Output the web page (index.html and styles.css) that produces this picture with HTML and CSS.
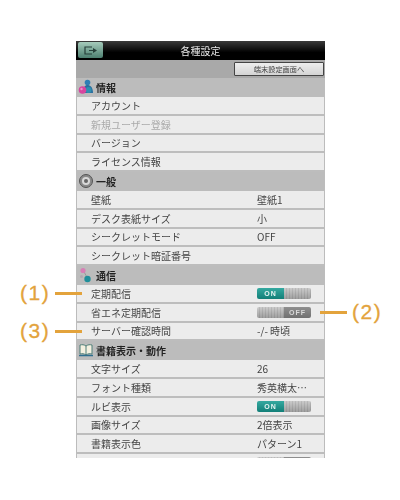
FILE: index.html
```html
<!DOCTYPE html>
<html>
<head>
    <title>各種設定</title>
    <link rel="stylesheet" href="styles.css">
</head>
<body>
    <div class="settings">
        <header class="title-bar">
            <button class="back-btn">
                <svg width="14" height="9" viewBox="0 0 14 9">
                    <path d="M8 1H1v7h7M5 4.500h5" fill="none" stroke="#27403a" stroke-width="1.200"/>
                    <path d="M9 2l4 2.500L9 7z" fill="#27403a"/>
                </svg>
            </button>
            <span class="title">各種設定</span>
        </header>
        <div class="tool-bar">
            <button class="device-btn">端末設定画面へ</button>
        </div>

        <div class="section">
            <svg class="section-icon" width="16" height="16" viewBox="0 0 16 16">
                <circle cx="9.500" cy="3.500" r="2.800" fill="#2f7fb5"/>
                <path d="M5 14c0-6 2-8 4.500-8s5.500 2 5.500 8z" fill="#2a6f9f"/>
                <circle cx="10.500" cy="11" r="3" fill="#2f8fb0"/>
                <circle cx="4.500" cy="11" r="3.800" fill="#d8459f"/>
                <circle cx="3.500" cy="10" r="1.200" fill="#ee90c8"/>
            </svg>
            情報
        </div>
        <div class="row"><span>アカウント</span></div>
        <div class="row disabled"><span>新規ユーザー登録</span></div>
        <div class="row"><span>バージョン</span></div>
        <div class="row"><span>ライセンス情報</span></div>

        <div class="section">
            <svg class="section-icon" width="16" height="16" viewBox="0 0 16 16">
                <circle cx="8" cy="8" r="6.500" fill="#8a8a8a" stroke="#555"/>
                <circle cx="8" cy="8" r="4" fill="#d8d8d8"/>
                <circle cx="8" cy="8" r="2" fill="#666"/>
            </svg>
            一般
        </div>
        <div class="row"><span>壁紙</span><span class="value">壁紙1</span></div>
        <div class="row"><span>デスク表紙サイズ</span><span class="value">小</span></div>
        <div class="row"><span>シークレットモード</span><span class="value">OFF</span></div>
        <div class="row"><span>シークレット暗証番号</span></div>

        <div class="section">
            <svg class="section-icon" width="16" height="16" viewBox="0 0 16 16">
                <path d="M5 3l5 9" stroke="#999"/>
                <circle cx="5" cy="3.500" r="2.600" fill="#d77fb5"/>
                <circle cx="3.500" cy="9.500" r="1.500" fill="#b0a8b0"/>
                <circle cx="9.500" cy="12" r="3.200" fill="#1f8f9a"/>
            </svg>
            通信
        </div>
        <div class="row"><span>定期配信</span><span class="value"><span class="toggle on"><b>ON</b><i></i></span></span></div>
        <div class="row"><span>省エネ定期配信</span><span class="value"><span class="toggle off"><i></i><b>OFF</b></span></span></div>
        <div class="row"><span>サーバー確認時間</span><span class="value">-/- 時頃</span></div>

        <div class="section">
            <svg class="section-icon" width="16" height="16" viewBox="0 0 16 16">
                <path d="M8 4C6 2.500 4 2.500 2 3v9c2-.5 4-.5 6 1 2-1.500 4-1.500 6-1V3c-2-.5-4-.5-6 1z" fill="#f4f0e0" stroke="#4f7f78"/>
                <path d="M8 4v9" stroke="#4f7f78"/>
                <path d="M1 13.500h14" stroke="#2f6f8f" stroke-width="1.500"/>
            </svg>
            書籍表示・動作
        </div>
        <div class="row"><span>文字サイズ</span><span class="value">26</span></div>
        <div class="row"><span>フォント種類</span><span class="value">秀英横太…</span></div>
        <div class="row"><span>ルビ表示</span><span class="value"><span class="toggle on"><b>ON</b><i></i></span></span></div>
        <div class="row"><span>画像サイズ</span><span class="value">2倍表示</span></div>
        <div class="row"><span>書籍表示色</span><span class="value">パターン1</span></div>
        <div class="row"><span></span><span class="value"><span class="toggle off"><i></i><b></b></span></span></div>
    </div>

    <div class="callout c1"><span>(1)</span><em></em></div>
    <div class="callout c2"><em></em><span>(2)</span></div>
    <div class="callout c3"><span>(3)</span><em></em></div>
</body>
</html>
```

FILE: styles.css
```css
:root {
    --row: #ececec;
    --band: #bcbcbc;
    --orange: #e3a33c;
}

* {
    box-sizing: border-box;
}

body {
    margin: 0;
    height: 500px;
    overflow: hidden;
    background: white;
    font-family: "Noto Sans CJK JP", "Liberation Sans", sans-serif;
}

.settings {
    width: 249px;
    height: 417px;
    margin: 41px 0 0 76px;
    overflow: hidden;
    background: var(--band);
    color: #444;
    font-size: 10px;
    filter: blur(0.4px);
}

.title-bar {
    height: 19px;
    display: flex;
    align-items: center;
    justify-content: center;
    position: relative;
    background: linear-gradient(#3a3a3a, #000 60%);
}

.title {
    color: #e8e8e8;
}

.back-btn {
    position: absolute;
    left: 2px;
    top: 1px;
    width: 25px;
    height: 16px;
    padding: 0;
    display: flex;
    align-items: center;
    justify-content: center;
    border: none;
    border-radius: 2px;
    background: linear-gradient(#a5cbbb, #4d7f70);
}

.tool-bar {
    height: 18px;
    display: flex;
    justify-content: flex-end;
    align-items: center;
    padding-right: 1px;
    background: #a9a9a9;
}

.device-btn {
    width: 90px;
    height: 14px;
    padding: 0;
    border: 1px solid #444;
    border-radius: 1px;
    background: linear-gradient(#eee, #d4d4d4);
    color: #444;
    font-family: inherit;
    font-size: 7.200px;
    line-height: 12px;
}

.section {
    height: 19px;
    display: flex;
    align-items: center;
    gap: 2px;
    padding: 0 0 1px 2px;
    background: var(--band);
    color: #222;
    font-weight: 700;
}

.section-icon {
    flex: none;
}

.row {
    height: 18.750px;
    display: flex;
    align-items: center;
    margin: 0 1px;
    padding-left: 14px;
    background: var(--row);
    border-bottom: 2px solid #bdbdbd;
}

.row > span:first-child {
    width: 166px;
}

.row.disabled {
    color: #aaa;
}

.toggle {
    width: 54px;
    height: 11px;
    display: flex;
    border-radius: 2px;
    overflow: hidden;
    font-size: 7px;
    line-height: 11px;
    text-align: center;
}

.toggle b {
    width: 27px;
    letter-spacing: 1px;
    font-family: "Liberation Sans", sans-serif;
}

.toggle i {
    flex: 1;
    background: linear-gradient(rgba(255,255,255,0.15), rgba(0,0,0,0.18)),
                repeating-linear-gradient(90deg, #c2c2c2 0 2px, #b0b0b0 2px 3px);
}

.toggle.on b {
    background: linear-gradient(#35a9a0, #127f78);
    color: #e6f4f2;
}

.toggle.off b {
    background: linear-gradient(#8f8f8f, #707070);
    color: #d8d8d8;
}

/* annotations drawn over the screenshot */
.callout {
    position: absolute;
    display: flex;
    align-items: center;
    gap: 5px;
    color: var(--orange);
    font-family: "Liberation Sans", sans-serif;
    font-size: 21px;
    line-height: 24px;
    letter-spacing: 1.500px;
    -webkit-text-stroke: 0.3px var(--orange);
}

.callout em {
    width: 27px;
    height: 3px;
    background: var(--orange);
}

.c1 {
    left: 20px;
    top: 281px;
}

.c2 {
    left: 320px;
    top: 300px;
}

.c3 {
    left: 20px;
    top: 319px;
}
```
